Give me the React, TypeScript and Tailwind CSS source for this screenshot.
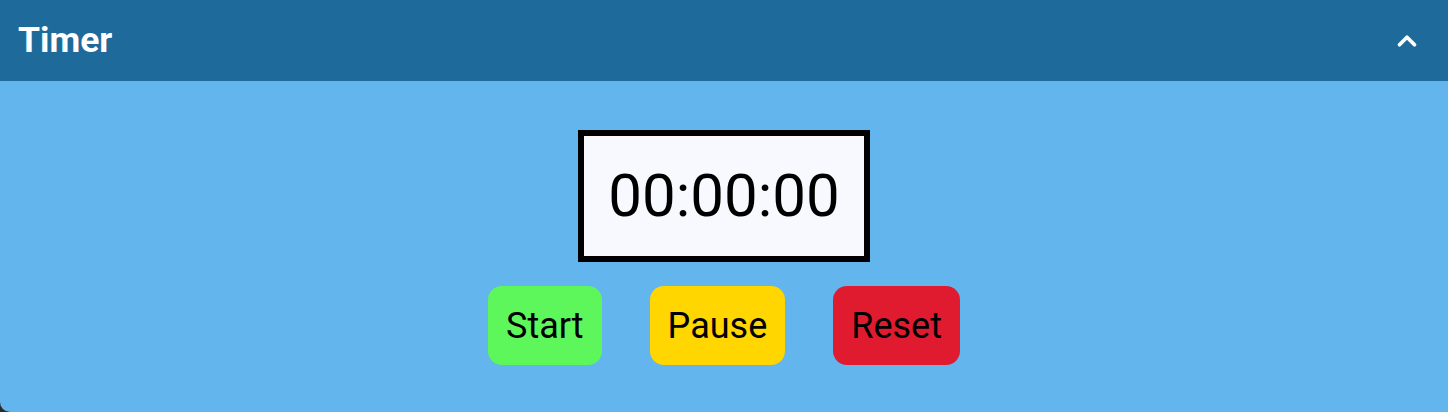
import { ChevronUp } from "lucide-react";

const font = { fontFamily: "Roboto, 'Liberation Sans', sans-serif" };

function TimerButton({ label, className }: { label: string; className: string }) {
  return (
    <button
      className={`rounded-[14px] px-[18px] h-[79px] text-[36px] leading-none text-black ${className}`}
      style={font}
    >
      {label}
    </button>
  );
}

export default function App() {
  return (
    <div className="h-[412px] w-full bg-[#2a2a2a]" style={font}>
      <div className="flex h-full flex-col overflow-hidden rounded-bl-[10px] bg-[#63b5ee]">
        <header className="flex h-[81px] shrink-0 items-center justify-between bg-[#1e6b9b] pl-[18px] pr-[26px]">
          <h1 className="text-[35.5px] font-bold text-white">Timer</h1>
          <ChevronUp className="h-[30px] w-[30px] text-white" strokeWidth={3} />
        </header>
        <main className="flex flex-1 flex-col items-center pt-[49px]">
          <div className="flex h-[132px] w-[292px] items-center justify-center border-[6px] border-black bg-[#f8f9ff]">
            <span className="text-[60px] leading-none text-black">00:00:00</span>
          </div>
          <div className="mt-[24px] flex gap-[48px]">
            <TimerButton label="Start" className="bg-[#5df75c]" />
            <TimerButton label="Pause" className="bg-[#ffd600]" />
            <TimerButton label="Reset" className="bg-[#e11b2f]" />
          </div>
        </main>
      </div>
    </div>
  );
}
